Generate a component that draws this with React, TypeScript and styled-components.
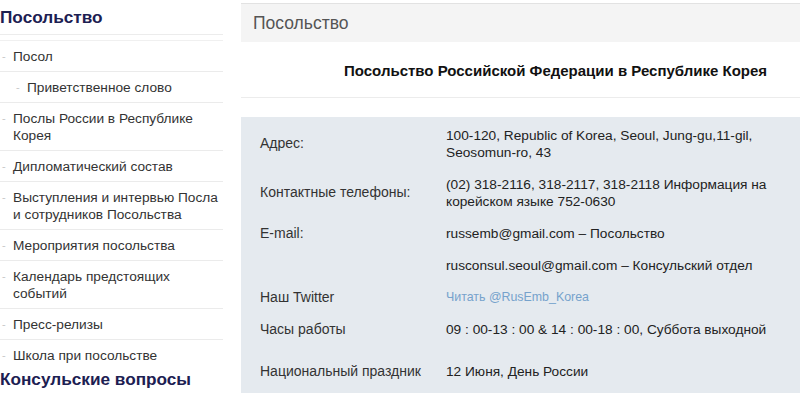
import React from 'react';
import styled, { createGlobalStyle } from 'styled-components';

const GlobalStyle = createGlobalStyle`
  html, body {
    margin: 0;
    padding: 0;
    background: #ffffff;
    overflow: hidden;
  }
  body {
    font-family: 'Liberation Sans', Arial, sans-serif;
    color: #333333;
  }
`;

const Page = styled.div`
  display: flex;
  align-items: flex-start;
  width: 800px;
  height: 393px;
  overflow: hidden;
`;

const Sidebar = styled.aside`
  width: 223px;
  flex: none;
`;

const SideHeading = styled.h2<{ $compact?: boolean }>`
  margin: 0;
  font-size: 17.2px;
  line-height: ${(p) => (p.$compact ? 16 : 34)}px;
  font-weight: bold;
  color: #1c2052;
  white-space: nowrap;
`;

const HeadingRule = styled.div`
  height: 1px;
  background: #ececec;
  margin-bottom: 5px;
`;

const MenuList = styled.ul`
  list-style: none;
  margin: 0;
  padding: 0;
  border-top: 1px solid #f0f0f0;
`;

const MenuItem = styled.li<{ $sub?: boolean; $last?: boolean }>`
  position: relative;
  padding: 7px 4px 6px ${(p) => (p.$sub ? 27 : 13)}px;
  font-size: 13.7px;
  line-height: 17px;
  color: #333333;
  border-bottom: 1px solid ${(p) => (p.$last ? 'transparent' : '#ebebeb')};

  &::before {
    content: '-';
    position: absolute;
    left: ${(p) => (p.$sub ? 16 : 2)}px;
    top: 7px;
    color: #c8c8c8;
    font-size: 11px;
  }
`;

const Main = styled.main`
  margin-left: 18px;
  flex: 1;
  padding-top: 3px;
`;

const TopBar = styled.div`
  border-top: 1px solid #e2e2e2;
  background: #f4f4f4;
  height: 38px;
  display: flex;
  align-items: center;
  padding-left: 12px;
  font-size: 17.5px;
  color: #555555;
`;

const Title = styled.h1`
  margin: 0;
  padding: 20px 0 18px 103px;
  font-size: 15px;
  line-height: 17px;
  font-weight: bold;
  color: #111111;
  border-bottom: 1px solid #ececec;
  white-space: nowrap;
`;

const InfoBox = styled.div`
  margin-top: 19px;
  background: #e5eaef;
  padding: 2px 0 40px;
`;

const Row = styled.div<{ $tall?: boolean }>`
  display: flex;
  align-items: center;
  padding: 7.5px 0 ${(p) => (p.$tall ? 17.5 : 7.5)}px 19px;
`;

const Label = styled.div`
  width: 186px;
  flex: none;
  font-size: 14px;
  line-height: 17px;
  color: #333333;
`;

const Value = styled.div`
  width: 340px;
  font-size: 13.7px;
  line-height: 17px;
  color: #222222;
`;

const TwitterLink = styled.a`
  display: block;
  font-size: 12.4px;
  line-height: 17px;
  color: #76a2cc;
  text-decoration: none;
`;

const menu = [
  { text: 'Посол' },
  { text: 'Приветственное слово', sub: true },
  { text: 'Послы России в Республике Корея' },
  { text: 'Дипломатический состав' },
  { text: 'Выступления и интервью Посла и сотрудников Посольства' },
  { text: 'Мероприятия посольства' },
  { text: 'Календарь предстоящих событий' },
  { text: 'Пресс-релизы' },
  { text: 'Школа при посольстве' },
];

export default function App() {
  return (
    <>
      <GlobalStyle />
      <Page>
        <Sidebar>
          <SideHeading>Посольство</SideHeading>
          <HeadingRule />
          <MenuList>
            {menu.map((m, i) => (
              <MenuItem key={m.text} $sub={m.sub} $last={i === menu.length - 1}>
                {m.text}
              </MenuItem>
            ))}
          </MenuList>
          <SideHeading as="div" $compact>
            Консульские вопросы
          </SideHeading>
        </Sidebar>
        <Main>
          <TopBar>Посольство</TopBar>
          <Title>Посольство Российской Федерации в Республике Корея</Title>
          <InfoBox>
            <Row>
              <Label>Адрес:</Label>
              <Value>
                100-120, Republic of Korea, Seoul, Jung-gu,11-gil,
                <br />
                Seosomun-ro, 43
              </Value>
            </Row>
            <Row>
              <Label>Контактные телефоны:</Label>
              <Value>
                (02) 318-2116, 318-2117, 318-2118 Информация на
                <br />
                корейском языке 752-0630
              </Value>
            </Row>
            <Row>
              <Label>E-mail:</Label>
              <Value>russemb@gmail.com – Посольство</Value>
            </Row>
            <Row>
              <Label />
              <Value>rusconsul.seoul@gmail.com – Консульский отдел</Value>
            </Row>
            <Row>
              <Label>Наш Twitter</Label>
              <Value>
                <TwitterLink href="#">Читать @RusEmb_Korea</TwitterLink>
              </Value>
            </Row>
            <Row $tall>
              <Label>Часы работы</Label>
              <Value>09 : 00-13 : 00 &amp; 14 : 00-18 : 00, Суббота выходной</Value>
            </Row>
            <Row>
              <Label>Национальный праздник</Label>
              <Value>12 Июня, День России</Value>
            </Row>
          </InfoBox>
        </Main>
      </Page>
    </>
  );
}
